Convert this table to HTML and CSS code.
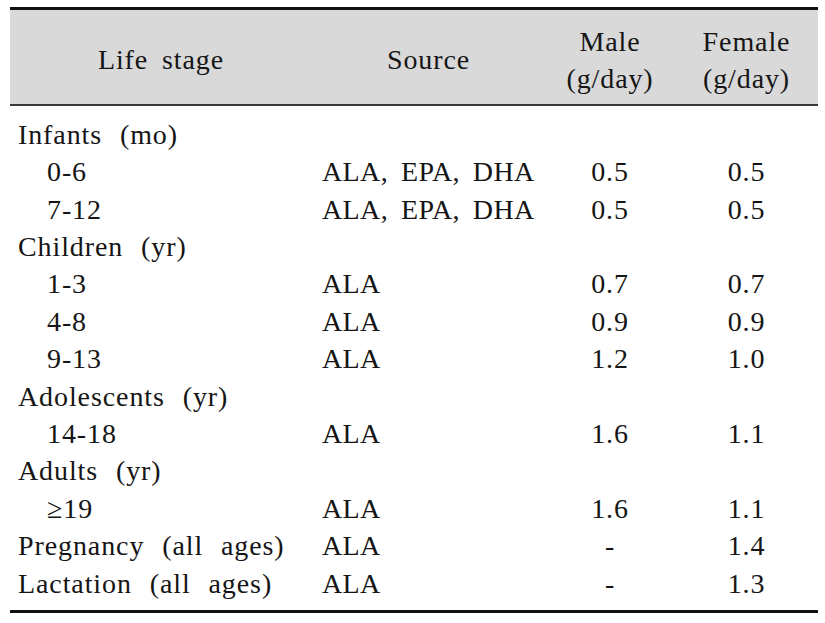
FILE: index.html
```html
<!DOCTYPE html>
<html lang="en">
<head>
<meta charset="utf-8">
<title>Omega-3 adequate intake</title>
<link rel="stylesheet" href="styles.css">
</head>
<body>
<div class="page">
  <table class="ai-table">
    <colgroup>
      <col class="c-stage">
      <col class="c-source">
      <col class="c-male">
      <col class="c-female">
    </colgroup>
    <thead>
      <tr>
        <th class="single">Life stage</th>
        <th class="single">Source</th>
        <th>Male<br>(g/day)</th>
        <th>Female<br>(g/day)</th>
      </tr>
    </thead>
    <tbody>
      <tr><td class="group">Infants (mo)</td><td></td><td></td><td></td></tr>
      <tr><td class="sub">0-6</td><td class="src">ALA, EPA, DHA</td><td class="num">0.5</td><td class="num">0.5</td></tr>
      <tr><td class="sub">7-12</td><td class="src">ALA, EPA, DHA</td><td class="num">0.5</td><td class="num">0.5</td></tr>
      <tr><td class="group">Children (yr)</td><td></td><td></td><td></td></tr>
      <tr><td class="sub">1-3</td><td class="src">ALA</td><td class="num">0.7</td><td class="num">0.7</td></tr>
      <tr><td class="sub">4-8</td><td class="src">ALA</td><td class="num">0.9</td><td class="num">0.9</td></tr>
      <tr><td class="sub">9-13</td><td class="src">ALA</td><td class="num">1.2</td><td class="num">1.0</td></tr>
      <tr><td class="group">Adolescents (yr)</td><td></td><td></td><td></td></tr>
      <tr><td class="sub">14-18</td><td class="src">ALA</td><td class="num">1.6</td><td class="num">1.1</td></tr>
      <tr><td class="group">Adults (yr)</td><td></td><td></td><td></td></tr>
      <tr><td class="sub">≥19</td><td class="src">ALA</td><td class="num">1.6</td><td class="num">1.1</td></tr>
      <tr><td class="group">Pregnancy (all ages)</td><td class="src">ALA</td><td class="num">-</td><td class="num">1.4</td></tr>
      <tr><td class="group">Lactation (all ages)</td><td class="src">ALA</td><td class="num">-</td><td class="num">1.3</td></tr>
    </tbody>
  </table>
</div>
</body>
</html>
```
FILE: styles.css
```css
html, body {
  margin: 0;
  padding: 0;
  background: #ffffff;
}

.page {
  padding: 7px 7px 0 10px;
}

.ai-table {
  width: 808px;
  border-collapse: collapse;
  table-layout: fixed;
  font-family: "Liberation Serif", "Times New Roman", serif;
  font-size: 28px;
  letter-spacing: 0.9px;
  word-spacing: 10px;
  color: #151515;
  border-top: 3px solid #111111;
  border-bottom: 3px solid #111111;
}

.c-stage { width: 302px; }
.c-source { width: 233px; }
.c-male { width: 130px; }
.c-female { width: 143px; }

.ai-table thead th {
  background: #d9d9d9;
  font-weight: normal;
  text-align: center;
  vertical-align: top;
  line-height: 37.4px;
  padding: 13px 0 6px;
  border-bottom: 2px solid #3a3a3a;
}

.ai-table thead th.single {
  padding-top: 31px;
  word-spacing: 6px;
}

.ai-table tbody td {
  line-height: 37.4px;
  padding: 0;
  white-space: nowrap;
}

.ai-table tbody tr:first-child td {
  padding-top: 10px;
}

.ai-table tbody tr:last-child td {
  padding-bottom: 8px;
}

.group {
  padding-left: 8px !important;
}

.sub {
  padding-left: 37px !important;
}

.src {
  padding-left: 10px !important;
  letter-spacing: 0.4px;
  word-spacing: 5.5px;
}

.num {
  text-align: center;
}
```
